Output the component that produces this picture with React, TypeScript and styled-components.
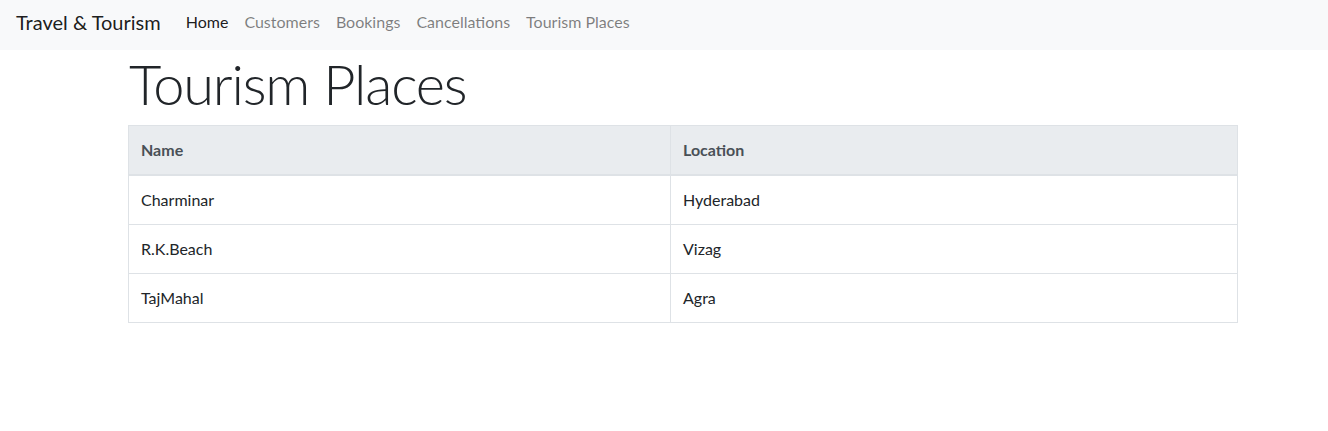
import React from "react";
import styled, { createGlobalStyle } from "styled-components";

const Global = createGlobalStyle`
  html, body { margin: 0; padding: 0; background: #fff; }
  body {
    font-family: Lato, "Noto Sans", "Liberation Sans", sans-serif;
    font-size: 16px;
    line-height: 1.5;
    color: #212529;
  }
  * { box-sizing: border-box; }
`;

const NavBar = styled.nav`
  display: flex;
  align-items: center;
  height: 50px;
  padding: 0 16px 6px;
  background: #f8f9fa;
`;

const Brand = styled.a`
  font-size: 20px;
  line-height: 30px;
  color: rgba(0, 0, 0, 0.9);
  margin-right: 17px;
  text-decoration: none;
  white-space: nowrap;
`;

const NavList = styled.ul`
  display: flex;
  list-style: none;
  margin: 0;
  padding: 0;
`;

const NavLink = styled.a<{ $active?: boolean }>`
  display: block;
  padding: 8px 8px;
  font-size: 16px;
  line-height: 24px;
  color: ${(p) => (p.$active ? "rgba(0,0,0,0.9)" : "rgba(0,0,0,0.5)")};
  text-decoration: none;
  white-space: nowrap;
`;

const Container = styled.main`
  width: 1110px;
  margin-left: 128px;
`;

const Title = styled.h1`
  margin: 0 0 8px;
  padding-left: 1px;
  font-size: 56px;
  font-weight: 300;
  line-height: 67px;
  letter-spacing: -1.2px;
  color: #212529;
`;

const Table = styled.table`
  width: 100%;
  border-collapse: collapse;
  border: 1px solid #dee2e6;
`;

const HeadCell = styled.th<{ $w?: number }>`
  text-align: left;
  padding: 12px;
  font-weight: 700;
  line-height: 24px;
  color: #495057;
  background: #e9ecef;
  border: 1px solid #dee2e6;
  border-bottom: 2px solid #dee2e6;
  width: ${(p) => (p.$w ? `${p.$w}px` : "auto")};
`;

const Cell = styled.td`
  padding: 12px;
  line-height: 24px;
  border: 1px solid #dee2e6;
`;

const links = ["Home", "Customers", "Bookings", "Cancellations", "Tourism Places"];
const places = [
  { name: "Charminar", location: "Hyderabad" },
  { name: "R.K.Beach", location: "Vizag" },
  { name: "TajMahal", location: "Agra" },
];

export default function App() {
  return (
    <>
      <Global />
      <NavBar>
        <Brand href="#">Travel &amp; Tourism</Brand>
        <NavList>
          {links.map((l, i) => (
            <li key={l}>
              <NavLink href="#" $active={i === 0}>
                {l}
              </NavLink>
            </li>
          ))}
        </NavList>
      </NavBar>
      <Container>
        <Title>Tourism Places</Title>
        <Table>
          <thead>
            <tr>
              <HeadCell $w={542}>Name</HeadCell>
              <HeadCell>Location</HeadCell>
            </tr>
          </thead>
          <tbody>
            {places.map((p) => (
              <tr key={p.name}>
                <Cell>{p.name}</Cell>
                <Cell>{p.location}</Cell>
              </tr>
            ))}
          </tbody>
        </Table>
      </Container>
    </>
  );
}
